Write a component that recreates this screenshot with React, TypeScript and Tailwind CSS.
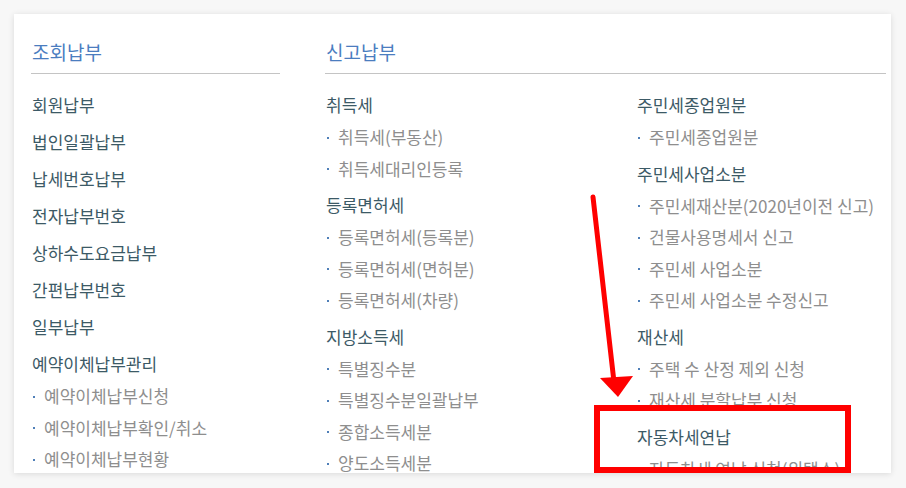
import React from 'react';

type Group = { title: string; items?: string[] };

const col1: Group[] = [
  { title: '회원납부' },
  { title: '법인일괄납부' },
  { title: '납세번호납부' },
  { title: '전자납부번호' },
  { title: '상하수도요금납부' },
  { title: '간편납부번호' },
  { title: '일부납부' },
  { title: '예약이체납부관리', items: ['예약이체납부신청', '예약이체납부확인/취소', '예약이체납부현황'] },
];

const col2: Group[] = [
  { title: '취득세', items: ['취득세(부동산)', '취득세대리인등록'] },
  { title: '등록면허세', items: ['등록면허세(등록분)', '등록면허세(면허분)', '등록면허세(차량)'] },
  { title: '지방소득세', items: ['특별징수분', '특별징수분일괄납부', '종합소득세분', '양도소득세분'] },
];

const col3: Group[] = [
  { title: '주민세종업원분', items: ['주민세종업원분'] },
  {
    title: '주민세사업소분',
    items: ['주민세재산분(2020년이전 신고)', '건물사용명세서 신고', '주민세 사업소분', '주민세 사업소분 수정신고'],
  },
  { title: '재산세', items: ['주택 수 산정 제외 신청', '재산세 분할납부 신청'] },
  { title: '자동차세연납', items: ['자동차세 연납 신청(위택스)'] },
];

const MenuList = ({ groups }: { groups: Group[] }) => (
  <ul className="mt-[10px]">
    {groups.map((g) => (
      <li key={g.title}>
        <div className="pt-[4px] leading-[33px] text-[17px] text-[#3c5a66] whitespace-nowrap">{g.title}</div>
        {g.items?.map((it) => (
          <div key={it} className="flex items-center leading-[31.5px] text-[17px] text-[#8e8e8e] whitespace-nowrap">
            <span className="ml-[1px] mr-[9px] mt-[2px] w-[2px] h-[2px] bg-[#4f7fb8]" />
            {it}
          </div>
        ))}
      </li>
    ))}
  </ul>
);

export default function App() {
  return (
    <div
      className="relative w-[906px] h-[488px] bg-[#f7f7f7] overflow-hidden"
      style={{ fontFamily: '"Noto Sans CJK KR", "Noto Sans", sans-serif' }}
    >
      <div className="ml-[14px] mt-[14px] w-[877px] h-[459px] bg-white shadow-[0_1px_6px_rgba(0,0,0,0.12)] overflow-hidden flex pl-[17px] pr-[5px] pt-[26px]">
        <div className="w-[249px]">
          <div className="pb-[9px] border-b border-[#c4c4c4] pl-[1px] text-[19px] leading-[24px] text-[#4b7dbf]">조회납부</div>
          <div className="pl-[1px]">
            <MenuList groups={col1} />
          </div>
        </div>
        <div className="ml-[45px] flex-1">
          <div className="pb-[9px] border-b border-[#c4c4c4] pl-[1px] text-[19px] leading-[24px] text-[#4b7dbf]">신고납부</div>
          <div className="flex">
            <div className="w-[312px] pl-[1px]">
              <MenuList groups={col2} />
            </div>
            <div className="flex-1">
              <MenuList groups={col3} />
            </div>
          </div>
        </div>
      </div>

      <svg className="absolute left-0 top-0" width="906" height="488" viewBox="0 0 906 488">
        <line x1="593" y1="197" x2="614" y2="382" stroke="#ff0000" strokeWidth="5" strokeLinecap="round" />
        <polygon points="600,378 633,376 618,397" fill="#ff0000" />
      </svg>
      <div className="absolute left-[594px] top-[405px] w-[257px] h-[68px] border-[6px] border-[#ff0000]" />
    </div>
  );
}
